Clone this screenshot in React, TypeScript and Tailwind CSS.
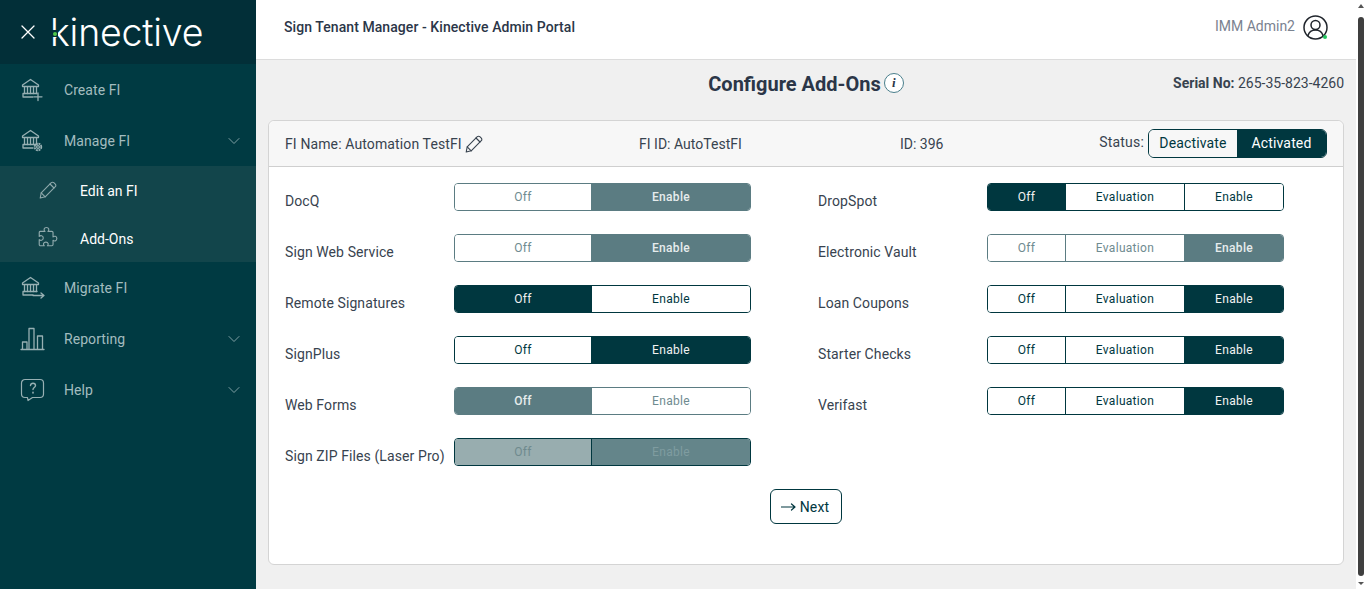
import React from "react";

const S = { fill: "none", stroke: "currentColor", strokeWidth: 1, strokeLinecap: "round" as const, strokeLinejoin: "round" as const };

function Bank({ children }: { children?: React.ReactNode }) {
  return (
    <svg width="26" height="24" viewBox="0 0 26 24" {...S} strokeWidth={1.300}>
      <path d="M2.500 7 10.500 1.500 18.500 7v1.500h-16z" />
      <path d="M4.500 9v6.500M7.500 9v6.500M10.500 9v6.500M13.500 9v6.500M16.500 9v6.500" />
      <path d="M3 15.500h14M3 16v3h10" />
      {children}
    </svg>
  );
}

const navIcons: Record<string, React.ReactNode> = {
  create: <Bank><path d="M18 15v7.500M14 18.800h8" /></Bank>,
  manage: (
    <Bank>
      <circle cx="18" cy="18" r="1.400" />
      <circle cx="18" cy="18" r="3.300" strokeDasharray="1.900 0.700" strokeWidth={1.800} strokeLinecap="butt" />
    </Bank>
  ),
  migrate: <Bank><path d="M13 19.500h11M21 17l3 2.500-3 2.500" /></Bank>,
  reporting: (
    <svg width="26" height="24" viewBox="0 0 26 24" {...S} strokeWidth={1.300}>
      <path d="M1 22.500h23M2.500 22v-7h4.500v7M9 22V1.500h5V22M17.500 22V9h5v13" />
    </svg>
  ),
  help: (
    <svg width="26" height="24" viewBox="0 0 26 24" {...S} strokeWidth={1.200}>
      <path d="M5 1.500h15a3.500 3.500 0 0 1 3.500 3.500v11a3.500 3.500 0 0 1-3.500 3.500H12.500L8 22.500l-.5-3H5A3.500 3.500 0 0 1 1.500 16V5A3.500 3.500 0 0 1 5 1.500z" />
      <path d="M10.500 7.500c.2-1.500 1.200-2.200 2.500-2.200 1.500 0 2.500.9 2.500 2.200 0 2-2.500 2-2.500 4" strokeWidth={1.400} />
      <path d="M13 14.300v.6" strokeWidth={1.600} />
    </svg>
  ),
};

function Chevron() {
  return (
    <svg width="12" height="8" viewBox="0 0 12 8" {...S} className="text-[#7f9fa3]">
      <path d="M1 1.500 6 6.500l5-5" />
    </svg>
  );
}

function Pencil() {
  return (
    <svg width="18" height="18" viewBox="0 0 18 18" {...S} strokeWidth={1.100}>
      <path d="M1.200 17l1-5.200L12.300 1.700c.7-.7 1.800-.7 2.500 0l1.500 1.500c.7.700.7 1.800 0 2.500L6.200 15.800z" />
      <path d="M2.200 11.800l4 4M11 3l4 4" />
    </svg>
  );
}

function Puzzle() {
  return (
    <svg width="24" height="24" viewBox="0 0 20 20" {...S} strokeWidth={0.950} className="-ml-[3px]">
      <path d="M7.500 4.500H3.500a1 1 0 0 0-.8 1v3.200c.6-.6 1.300-.8 2-.6 1.800.5 1.800 3.300 0 3.800-.7.200-1.400 0-2-.6v4.200a1 1 0 0 0 1 1h3.200c-.6-.6-.8-1.300-.6-1.900.5-1.600 3.400-1.600 3.800 0 .2.700 0 1.300-.6 1.900h3.700a1 1 0 0 0 1-1v-3.600c.6.500 1.200.7 1.900.5 1.700-.5 1.700-3.300 0-3.800-.7-.2-1.300 0-1.900.5V5.500a1 1 0 0 0-1-1h-3.200c.6-.6.8-1.300.6-2-.5-1.700-3.300-1.700-3.800 0-.2.700 0 1.400.7 2z" />
    </svg>
  );
}

function NavItem({ icon, label, chevron }: { icon: string; label: string; chevron?: boolean }) {
  return (
    <div className="flex h-[51px] items-center pl-[20px] pr-[16px] text-[#a3bcbf]">
      <div className="flex w-[44px] text-[#97b0b3]">{navIcons[icon]}</div>
      <span className="mt-[2px] flex-1 text-[14px] tracking-[0.07px]">{label}</span>
      {chevron && <Chevron />}
    </div>
  );
}

function SubItem({ icon, label }: { icon: React.ReactNode; label: string }) {
  return (
    <div className="flex h-[48px] items-center pl-[39px] text-white">
      <div className="flex w-[41px] text-[#8fa9ac]">{icon}</div>
      <span className="mt-[2px] text-[14px]">{label}</span>
    </div>
  );
}

type Seg = { t: string; w: string; on?: boolean };

function Toggle({ segs, tone = "live" }: { segs: Seg[]; tone?: "live" | "muted" | "disabled" }) {
  const frame = tone === "muted" ? "border-[#5b7c82]" : "border-[#00373f]";
  return (
    <div className={`flex h-[28px] w-[297px] overflow-hidden rounded-[4px] border ${frame} text-[12px] tracking-[0.3px]`}>
      {segs.map((s, i) => {
        let cls = "";
        if (tone === "live") cls = s.on ? "bg-[#00373f] text-[#f2f2f2]" : "bg-white text-[#00373f]";
        if (tone === "muted") cls = s.on ? "bg-[#5b7c82] font-medium text-[#e6eced]" : "bg-white text-[#6f8b90]";
        if (tone === "disabled") cls = i === 0 ? "bg-[#98adaf] text-[#6f8a8e]" : "bg-[#64858a] text-[#7f9ca0]";
        const sep = i > 0 ? (tone === "muted" ? "border-l border-[#5b7c82]" : "border-l border-[#00373f]") : "";
        return (
          <div key={s.t} className={`flex items-center justify-center ${s.w} ${cls} ${sep}`}>
            {s.t}
          </div>
        );
      })}
    </div>
  );
}

function two(on: "Off" | "Enable"): Seg[] {
  return [
    { t: "Off", w: "w-[136px]", on: on === "Off" },
    { t: "Enable", w: "flex-1", on: on === "Enable" },
  ];
}
function three(on: "Off" | "Evaluation" | "Enable"): Seg[] {
  return [
    { t: "Off", w: "w-[77px]", on: on === "Off" },
    { t: "Evaluation", w: "w-[119px]", on: on === "Evaluation" },
    { t: "Enable", w: "flex-1", on: on === "Enable" },
  ];
}

function Row({ label, lw, children }: { label: string; lw: string; children: React.ReactNode }) {
  return (
    <div className="flex h-[28px] items-start">
      <div className={`${lw} pt-[8px] text-[14px] leading-[20px] tracking-[0.1px] whitespace-nowrap text-[#38434f]`}>{label}</div>
      {children}
    </div>
  );
}

const left: { l: string; on: "Off" | "Enable"; tone: "live" | "muted" | "disabled" }[] = [
  { l: "DocQ", on: "Enable", tone: "muted" },
  { l: "Sign Web Service", on: "Enable", tone: "muted" },
  { l: "Remote Signatures", on: "Off", tone: "live" },
  { l: "SignPlus", on: "Enable", tone: "live" },
  { l: "Web Forms", on: "Off", tone: "muted" },
  { l: "Sign ZIP Files (Laser Pro)", on: "Enable", tone: "disabled" },
];
const right: { l: string; on: "Off" | "Evaluation" | "Enable"; tone: "live" | "muted" }[] = [
  { l: "DropSpot", on: "Off", tone: "live" },
  { l: "Electronic Vault", on: "Enable", tone: "muted" },
  { l: "Loan Coupons", on: "Enable", tone: "live" },
  { l: "Starter Checks", on: "Enable", tone: "live" },
  { l: "Verifast", on: "Enable", tone: "live" },
];

export default function App() {
  return (
    <div className="flex h-[589px] w-[1366px] overflow-hidden bg-[#f0f0f0] font-['Roboto',sans-serif]">
      <aside className="flex w-[256px] shrink-0 flex-col bg-[#003a42]">
        <div className="flex h-[64px] items-center bg-[#022f38] pl-[20px] text-white">
          <svg width="16" height="16" viewBox="0 0 16 16" {...S} strokeWidth={1.300}>
            <path d="M2 2l12 12M14 2 2 14" />
          </svg>
          <div className="relative mt-[2px] ml-[14px] font-['Inter',sans-serif] text-[37.500px] leading-[44px] font-[350] tracking-[-0.2px]">
            kinective
            <span className="absolute top-[19px] left-[2px] h-[7px] w-[6px] bg-[#022f38]" />
            <span className="absolute top-[21px] left-[3px] h-[4px] w-[4px] rounded-full bg-[#4fc74a]" />
          </div>
        </div>
        <NavItem icon="create" label="Create FI" />
        <NavItem icon="manage" label="Manage FI" chevron />
        <div className="bg-[#12454b]">
          <SubItem icon={<Pencil />} label="Edit an FI" />
          <SubItem icon={<Puzzle />} label="Add-Ons" />
        </div>
        <NavItem icon="migrate" label="Migrate FI" />
        <NavItem icon="reporting" label="Reporting" chevron />
        <NavItem icon="help" label="Help" chevron />
      </aside>

      <main className="flex min-w-0 flex-1 flex-col">
        <header className="flex h-[60px] shrink-0 items-center justify-between border-b border-[#dcdcdc] bg-white pr-[28px] pl-[28px]">
          <div className="mb-[4px] text-[14px] font-medium tracking-[0.07px] text-[#2b3648]">Sign Tenant Manager - Kinective Admin Portal</div>
          <div className="flex items-center gap-[8px] pb-[4px] text-[14px] text-[#7a8290]">
            <span className="mb-[2px]">IMM Admin2</span>
            <div className="relative h-[25px] w-[25px] text-[#20252c]">
              <svg width="25" height="25" viewBox="0 0 25 25" {...S} strokeWidth={1.500}>
                <circle cx="12.500" cy="12.500" r="11.500" />
                <circle cx="12.500" cy="10" r="4.500" />
                <path d="M5 20.500c1-3.500 3.500-5.500 7.500-5.500s6.500 2 7.500 5.500" />
              </svg>
              <span className="absolute right-[1px] bottom-[1px] h-[4px] w-[4px] rounded-full bg-[#22c55e]" />
            </div>
          </div>
        </header>

        <div className="flex flex-1 flex-col px-[12px]">
          <div className="relative flex h-[60px] items-start justify-center pt-[10px]">
            <div className="flex items-center gap-[3px] text-[20px] leading-[28px] font-bold text-[#2b3648]">
              Configure Add-Ons
              <span className="mb-[3px] flex h-[20px] w-[20px] items-center justify-center rounded-full border border-[#4a7f8c] bg-white font-['Liberation_Serif',serif] text-[13px] font-bold italic">
                i
              </span>
            </div>
            <div className="absolute top-[13px] right-0 text-[14px] text-[#38434f]">
              <span className="font-bold">Serial No:</span> 265-35-823-4260
            </div>
          </div>

          <section className="flex h-[445px] flex-col rounded-[6px] border border-[#d4d4d4] bg-white">
            <div className="flex h-[46px] shrink-0 items-center rounded-t-[6px] border-b border-[#cfcfcf] bg-[#f7f7f7] pr-[16px] pl-[16px] text-[14px] text-[#38434f]">
              <div className="flex w-[354px] items-center gap-[3px] tracking-[0.12px]">
                <span className="mt-[2px]">FI Name: Automation TestFI</span> <Pencil />
              </div>
              <div className="mt-[2px] w-[261px] tracking-[0.02px]">FI ID: AutoTestFI</div>
              <div className="mt-[2px] flex-1">ID: 396</div>
              <span className="mr-[4px] mb-[2px] tracking-[0.2px]">Status:</span>
              <div className="flex h-[29px] w-[179px] overflow-hidden rounded-[6px] border border-[#00373f] text-[14px] tracking-[0.15px]">
                <div className="flex w-[88px] items-center justify-center bg-[#f7f7f7] text-[#00373f]">Deactivate</div>
                <div className="flex flex-1 items-center justify-center bg-[#00373f] text-white">Activated</div>
              </div>
            </div>

            <div className="flex pt-[16px] pl-[16px]">
              <div className="flex w-[533px] flex-col gap-[23px]">
                {left.map((r) => (
                  <Row key={r.l} label={r.l} lw="w-[169px]">
                    <Toggle segs={two(r.on)} tone={r.tone} />
                  </Row>
                ))}
              </div>
              <div className="flex flex-col gap-[23px]">
                {right.map((r) => (
                  <Row key={r.l} label={r.l} lw="w-[169px]">
                    <Toggle segs={three(r.on)} tone={r.tone} />
                  </Row>
                ))}
              </div>
            </div>

            <div className="mt-[23px] flex justify-center">
              <button className="flex h-[35px] w-[72px] items-center justify-center gap-[4px] rounded-[6px] border border-[#00373f] bg-white pr-[2px] text-[14px] tracking-[0.2px] text-[#00373f]">
                <svg width="15" height="10" viewBox="0 0 15 10" {...S} strokeWidth={1.200}>
                  <path d="M.500 5h13.500M10.500 2l3.500 3-3.500 3" />
                </svg>
                <span className="mt-[2px]">Next</span>
              </button>
            </div>
          </section>
        </div>
      </main>

      <div className="flex w-[10px] shrink-0 flex-col items-center bg-white">
        <div className="mt-[4px] h-0 w-0 border-r-[3px] border-b-[4px] border-l-[3px] border-r-transparent border-b-[#555] border-l-transparent" />
        <div className="mt-[9px] h-[559px] w-[6px] rounded-[3px] bg-[#3f3f3f]" />
        <div className="mt-[6px] h-0 w-0 border-t-[3px] border-r-[3px] border-l-[3px] border-t-[#555] border-r-transparent border-l-transparent" />
      </div>
    </div>
  );
}
